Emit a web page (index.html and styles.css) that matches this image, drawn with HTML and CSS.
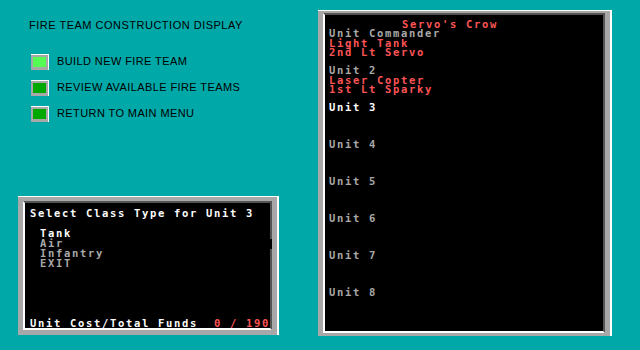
FILE: index.html
```html
<!DOCTYPE html>
<html lang="en">
<head>
  <meta charset="UTF-8">
  <meta name="viewport" content="width=device-width, initial-scale=1.0">
  <title>Fire Team Construction Display</title>
  <link rel="stylesheet" href="styles.css">
</head>
<body>
  <div class="screen">
    <div class="left">
      <div class="heading">FIRE TEAM CONSTRUCTION DISPLAY</div>
      <div class="menu">
        <div class="menu-item"><span class="btn"><span class="lamp on"></span></span><span>BUILD NEW FIRE TEAM</span></div>
        <div class="menu-item"><span class="btn"><span class="lamp"></span></span><span>REVIEW AVAILABLE FIRE TEAMS</span></div>
        <div class="menu-item"><span class="btn"><span class="lamp"></span></span><span>RETURN TO MAIN MENU</span></div>
      </div>

      <div class="frame select-frame">
        <div class="frame-inner select">
          <span class="notch"></span>
          <div class="white">Select Class Type for Unit 3</div>
          <div class="blank"></div>
          <div class="choices">
            <div class="white">Tank</div>
            <div class="grey">Air</div>
            <div class="grey">Infantry</div>
            <div class="grey">EXIT</div>
          </div>
          <div class="funds">
            <span class="white">Unit Cost/Total Funds</span>
            <span class="red">0 / 190</span>
          </div>
        </div>
      </div>
    </div>

    <div class="frame team-frame">
      <div class="frame-inner team">
        <div class="team-name red">Servo's Crow</div>
        <div class="unit">
          <div class="grey">Unit Commander</div>
          <div class="red">Light Tank</div>
          <div class="red">2nd Lt Servo</div>
        </div>
        <div class="unit">
          <div class="grey">Unit 2</div>
          <div class="red">Laser Copter</div>
          <div class="red">1st Lt Sparky</div>
        </div>
        <div class="unit"><div class="white">Unit 3</div></div>
        <div class="unit"><div class="grey">Unit 4</div></div>
        <div class="unit"><div class="grey">Unit 5</div></div>
        <div class="unit"><div class="grey">Unit 6</div></div>
        <div class="unit"><div class="grey">Unit 7</div></div>
        <div class="unit"><div class="grey">Unit 8</div></div>
      </div>
    </div>
  </div>
</body>
</html>
```

FILE: styles.css
```css
body {
  margin: 0;
  padding: 0;
  background: #00a8a8;
  font-family: "Liberation Sans", Arial, sans-serif;
  overflow: hidden;
}

.screen {
  display: flex;
  width: 640px;
  height: 350px;
}

.left {
  width: 318px;
  display: flex;
  flex-direction: column;
}

.heading {
  margin: 19px 0 0 29px;
  font-size: 11px;
  line-height: 13px;
  letter-spacing: 0.5px;
  color: #000;
}

.menu {
  display: flex;
  flex-direction: column;
  gap: 10px;
  margin: 22px 0 0 31px;
}

.menu-item {
  display: flex;
  align-items: flex-start;
  gap: 8px;
  font-size: 11px;
  line-height: 15px;
  letter-spacing: 0.4px;
  color: #000;
}

.btn {
  display: block;
  box-sizing: border-box;
  width: 18px;
  height: 16px;
  padding: 2px 0 0 2px;
  background: #a8a8a8;
  border-top: 1px solid #fff;
  border-right: 1px solid #fff;
}

.lamp {
  display: block;
  width: 13px;
  height: 10px;
  background: #00a800;
}

.lamp.on {
  background: #54fc54;
}

/* bevelled DOS style window */
.frame {
  box-sizing: border-box;
  background: #a8a8a8;
  border-top: 1px solid #fff;
  border-right: 2px solid #fff;
}

.frame-inner {
  box-sizing: border-box;
  height: 100%;
  background: #000;
  border-left: 2px solid #fff;
  border-bottom: 2px solid #fff;
  border-top: 2px solid #545454;
  border-right: 2px solid #545454;
  font-family: "DejaVu Sans Mono", "Liberation Mono", monospace;
  font-weight: bold;
  font-size: 10.5px;
  letter-spacing: 1.68px;
  white-space: nowrap;
}

.white { color: #fcfcfc; }
.grey { color: #a8a8a8; }
.red { color: #fc5454; }

.select-frame {
  width: 261px;
  height: 139px;
  margin: auto 0 15px 18px;
  padding: 4px 5px 5px 5px;
}

.select {
  position: relative;
  display: flex;
  flex-direction: column;
  padding: 5px 0 0 5px;
  line-height: 10px;
}

.blank {
  height: 10px;
}

.choices {
  padding-left: 10px;
}

.funds {
  display: flex;
  justify-content: space-between;
  margin-top: auto;
}

.notch {
  position: absolute;
  right: -2px;
  top: 36px;
  width: 2px;
  height: 10px;
  background: #000;
}

.team-frame {
  width: 294px;
  height: 326px;
  margin-top: 10px;
  padding: 2px 5px 3px 5px;
}

.team {
  padding: 5px 0 0 4px;
  line-height: 9.5px;
}

.team-name {
  height: 9px;
  line-height: 9px;
  padding-left: 73px;
}

.unit {
  height: 37px;
}
```
